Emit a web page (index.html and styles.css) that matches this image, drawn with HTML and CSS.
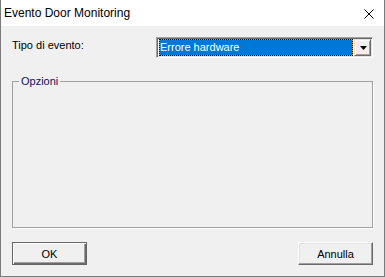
FILE: index.html
```html
<!DOCTYPE html>
<html lang="it">
<head>
  <meta charset="UTF-8">
  <title>Evento Door Monitoring</title>
  <link rel="stylesheet" href="styles.css">
</head>
<body>
  <div class="window">
    <div class="titlebar">
      <span class="title">Evento Door Monitoring</span>
      <svg class="close" width="10" height="10" viewBox="0 0 10 10">
        <path d="M0.5 0.5 L9.5 9.5 M9.5 0.5 L0.5 9.5" stroke="#000" stroke-width="1" fill="none"/>
      </svg>
    </div>
    <div class="content">
      <div class="row">
        <label class="label" for="tipo">Tipo di evento:</label>
        <div class="combo" id="tipo">
          <div class="selection">Errore hardware</div>
          <div class="drop">
            <svg width="7" height="4" viewBox="0 0 7 4"><polygon points="0,0 7,0 3.5,4" fill="#000"/></svg>
          </div>
        </div>
      </div>
      <fieldset class="group">
        <legend>Opzioni</legend>
      </fieldset>
      <div class="buttons">
        <button class="btn default">OK</button>
        <button class="btn">Annulla</button>
      </div>
    </div>
  </div>
</body>
</html>
```
FILE: styles.css
```css
body {
  margin: 0;
  font-family: "Liberation Sans", Arial, sans-serif;
  font-size: 11px;
  color: #000;
}
.window {
  width: 385px;
  height: 277px;
  box-sizing: border-box;
  border: 1px solid #7a7a7a;
  border-top: none;
  background-color: #f0f0f0;
  display: flex;
  flex-direction: column;
}
.titlebar {
  height: 26px;
  background-color: #fff;
  display: flex;
  align-items: center;
  justify-content: space-between;
  padding: 0 10px 0 3px;
  flex-shrink: 0;
}
.title {
  font-size: 12px;
  margin-top: -1px;
}
.close {
  display: block;
  margin-top: 1px;
}
.content {
  flex: 1;
  display: flex;
  flex-direction: column;
  padding: 11px 10px 11px 11px;
}
.row {
  display: flex;
  height: 21px;
}
.label {
  width: 144px;
  padding-top: 2px;
}
.combo {
  width: 217px;
  height: 21px;
  box-sizing: border-box;
  border: 1px solid;
  border-color: #a0a0a0 #fff #fff #a0a0a0;
  box-shadow: inset 1px 1px 0 #696969, inset -1px -1px 0 #e3e3e3;
  background-color: #fff;
  display: flex;
  padding: 1px 1px 1px 2px;
}
.selection {
  flex: 1;
  border: 1px dotted #111;
  background: linear-gradient(#0078d7, #0078d7) padding-box, linear-gradient(#e8902e, #e8902e) border-box;
  color: #fff;
  line-height: 15px;
  padding-left: 0;
  margin-right: 1px;
}
.drop {
  width: 17px;
  box-sizing: border-box;
  border: 1px solid;
  border-color: #e3e3e3 #696969 #696969 #e3e3e3;
  box-shadow: inset 1px 1px 0 #fff, inset -1px -1px 0 #a0a0a0;
  background-color: #f0f0f0;
  display: flex;
  align-items: center;
  justify-content: center;
}
.drop svg {
  display: block;
  margin-left: 1px;
}
.group {
  flex: 1;
  margin: 17px 1px 0 0;
  padding: 0;
  border: 1px solid #a0a0a0;
  box-shadow: 1px 1px 0 #fff;
}
.group legend {
  margin-left: 6px;
  padding: 0 2px;
  line-height: 13px;
  color: #0c1450;
}
.buttons {
  display: flex;
  justify-content: space-between;
  margin-top: 14px;
  padding-right: 1px;
}
.btn {
  width: 75px;
  height: 23px;
  font-family: "Liberation Sans", Arial, sans-serif;
  font-size: 11px;
  color: #000;
  background-color: #f0f0f0;
  border: 1px solid;
  border-color: #fff #696969 #696969 #fff;
  box-shadow: inset -1px -1px 0 #a0a0a0, inset 1px 1px 0 #e3e3e3;
  padding: 0;
}
.btn.default {
  border-color: #646464;
  box-shadow: inset 1px 1px 0 #fff, inset -1px -1px 0 #696969, inset -2px -2px 0 #a0a0a0;
}
```
